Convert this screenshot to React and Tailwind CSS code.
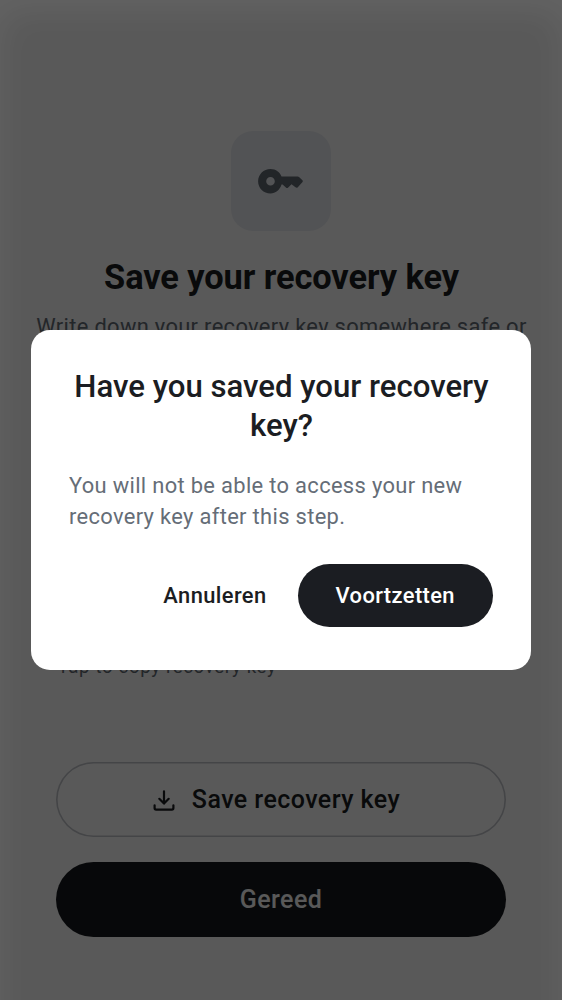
function KeyIcon() {
  return (
    <svg width="48" height="28" viewBox="0 0 48 28" className="mr-[2px] block text-[#626a73]" fill="currentColor" aria-hidden="true">
      <path fillRule="evenodd" d="M14.5 2C20 2 24 5.300 25.500 9.500H41.600C42.300 9.500 42.800 9.700 43.300 10.200L46.200 13C47 13.800 47 14.500 46.300 15.300L41.800 20.200C41.100 20.900 40.300 21 39.500 20.300L35.500 17.200L32.200 20.400C31.500 21.100 30.600 21.100 29.900 20.400L26.600 17.400L25.500 17.600C24 22.800 19.500 26.600 14.500 26.600C7.600 26.600 2.100 21.100 2.100 14.300C2.100 7.500 7.600 2 14.500 2ZM14.500 10A4.300 4.300 0 1 0 14.500 18.600A4.300 4.300 0 1 0 14.500 10Z" />
    </svg>
  )
}

function DownloadIcon() {
  return (
    <svg width="24" height="24" viewBox="0 0 24 24" fill="none" stroke="currentColor" strokeWidth="2.2" strokeLinecap="round" strokeLinejoin="round" aria-hidden="true">
      <path d="M12 3.300V15.200M7.300 10.800L12 15.600L16.700 10.800M2.600 17.300V20.100Q2.600 21.600 4.100 21.600H19.900Q21.400 21.600 21.400 20.100V17.300" />
    </svg>
  )
}

function RecoveryPage() {
  return (
    <main className="flex h-full flex-col items-center bg-white pt-[131px] whitespace-nowrap">
      <div className="flex h-[100px] w-[100px] items-center justify-center rounded-[22px] bg-[#ebedf2]">
        <KeyIcon />
      </div>
      <h1 className="mt-[26px] pl-px text-[34.4px] leading-[40px] font-bold tracking-[-0.08px] text-[#1b1d22]">Save your recovery key</h1>
      <p className="mt-[14px] h-[32px] pl-px text-[21.9px] leading-[31px] tracking-[0.33px] text-[#656d77]">Write down your recovery key somewhere safe or</p>
      <p className="mt-[312px] w-full pl-[57.5px] text-[18.7px] leading-[24px] tracking-[0.62px] text-[#656d77]">Tap to copy recovery key</p>
      <div className="mt-[83px] flex w-[450px] flex-col gap-[25px] text-[25px] font-medium tracking-[0.45px]">
        <button className="flex h-[75px] items-center justify-center gap-4 rounded-full pr-[10px] text-[#1b1d22] shadow-[inset_0_0_0_1.6px_#c3c5cb]">
          <DownloadIcon />
          Save recovery key
        </button>
        <button className="h-[75px] rounded-full bg-[#16191d] text-white">Gereed</button>
      </div>
    </main>
  )
}

function ConfirmDialog() {
  return (
    <section role="dialog" aria-modal="true" className="relative flex h-[340px] w-[500px] flex-col rounded-[19px] bg-white px-[38px] pt-[37px] whitespace-nowrap text-[#1b1d22]">
      <h2 className="pl-px text-center text-[31.2px] leading-[39px] font-medium tracking-[-0.02px]">
        Have you saved your recovery<br />key?
      </h2>
      <p className="mt-[25px] text-[21.9px] leading-[31.2px] tracking-[0.33px] text-[#656d77]">
        You will not be able to access your new<br />recovery key after this step.
      </p>
      <div className="mt-[32px] flex items-center justify-end gap-[31px] text-[21.9px] font-medium tracking-[0.39px]">
        <button className="pt-px">Annuleren</button>
        <button className="h-[62.5px] w-[195.5px] rounded-full bg-[#1b1d22] pt-px text-white">Voortzetten</button>
      </div>
    </section>
  )
}

export default function App() {
  return (
    <div className="relative h-[1000px] w-[562px] overflow-hidden font-['Roboto',sans-serif]">
      <RecoveryPage />
      <div className="absolute inset-0 flex items-center justify-center bg-black/65">
        <div className="absolute inset-x-0 top-0 -bottom-12 shadow-[inset_0_10px_36px_rgba(255,255,255,0.065)]" />
        <ConfirmDialog />
      </div>
    </div>
  )
}
